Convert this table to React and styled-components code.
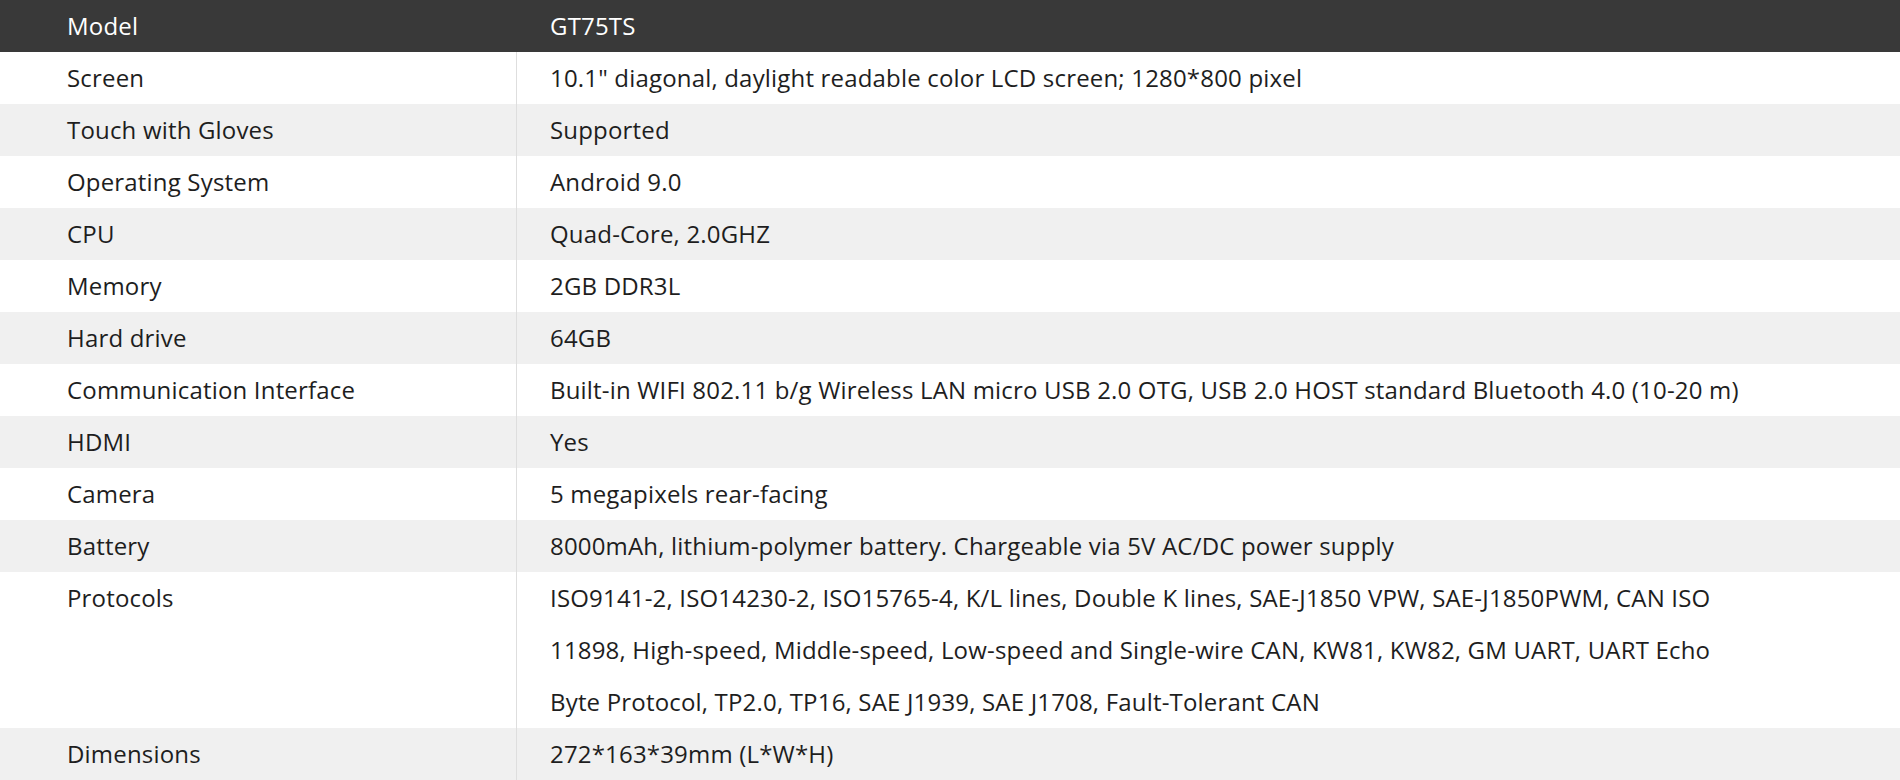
import styled, { createGlobalStyle } from "styled-components";

const GlobalStyle = createGlobalStyle`
  html, body {
    margin: 0;
    padding: 0;
    background: #fff;
  }
  body {
    font-family: "Open Sans", "Noto Sans", sans-serif;
  }
`;

const specs = [
  { label: "Screen", value: '10.1" diagonal, daylight readable color LCD screen; 1280*800 pixel' },
  { label: "Touch with Gloves", value: "Supported" },
  { label: "Operating System", value: "Android 9.0" },
  { label: "CPU", value: "Quad-Core, 2.0GHZ" },
  { label: "Memory", value: "2GB DDR3L" },
  { label: "Hard drive", value: "64GB" },
  {
    label: "Communication Interface",
    value:
      "Built-in WIFI 802.11 b/g Wireless LAN micro USB 2.0 OTG, USB 2.0 HOST standard Bluetooth 4.0 (10-20 m)",
  },
  { label: "HDMI", value: "Yes" },
  { label: "Camera", value: "5 megapixels rear-facing" },
  {
    label: "Battery",
    value: "8000mAh, lithium-polymer battery. Chargeable via 5V AC/DC power supply",
  },
  {
    label: "Protocols",
    long: true,
    value:
      "ISO9141-2, ISO14230-2, ISO15765-4, K/L lines, Double K lines, SAE-J1850 VPW, SAE-J1850PWM, CAN ISO 11898, High-speed, Middle-speed, Low-speed and Single-wire CAN, KW81, KW82, GM UART, UART Echo Byte Protocol, TP2.0, TP16, SAE J1939, SAE J1708, Fault-Tolerant CAN",
  },
  { label: "Dimensions", value: "272*163*39mm (L*W*H)" },
];

const Table = styled.div`
  width: 1900px;
  display: flex;
  flex-direction: column;
`;

const Row = styled.div`
  display: grid;
  grid-template-columns: 517px 1fr;
  background: ${(p) => (p.$head ? "#393939" : p.$striped ? "#f0f0f0" : "#ffffff")};
  color: ${(p) => (p.$head ? "#ffffff" : "#1e1e1e")};
  font-size: 24px;
  letter-spacing: 0.18px;
  line-height: 52px;
`;

const Label = styled.div`
  padding-left: 67px;
  border-right: 1px solid ${(p) => (p.$head ? "transparent" : "#dedede")};
`;

const Value = styled.div`
  padding-left: 33px;
  padding-right: ${(p) => (p.$long ? "165px" : "30px")};
`;

export default function App() {
  return (
    <>
      <GlobalStyle />
      <Table>
        <Row $head>
          <Label $head>Model</Label>
          <Value>GT75TS</Value>
        </Row>
        {specs.map((s, i) => (
          <Row key={s.label} $striped={i % 2 === 1}>
            <Label>{s.label}</Label>
            <Value $long={s.long}>{s.value}</Value>
          </Row>
        ))}
      </Table>
    </>
  );
}
